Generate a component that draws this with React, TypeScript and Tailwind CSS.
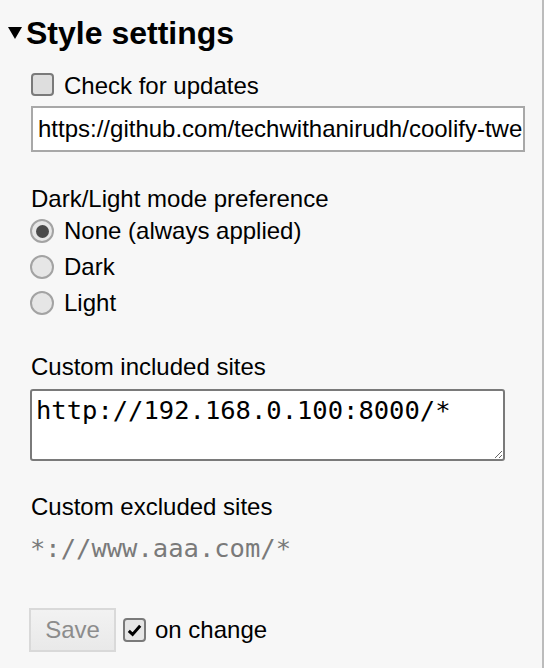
import { useState } from 'react'

type Mode = 'none' | 'dark' | 'light'

function Radio({ checked, label, onClick }: { checked: boolean; label: string; onClick: () => void }) {
  return (
    <label className="flex h-[36px] items-center leading-[36px]" onClick={onClick}>
      <span className="ml-[-1px] mr-[10px] flex h-[24px] w-[24px] items-center justify-center rounded-full border-2 border-[#a3a3a3] bg-[#e6e6e6]">
        {checked && <span className="h-[13px] w-[13px] rounded-full bg-[#4a4a4a]"></span>}
      </span>
      <span>{label}</span>
    </label>
  )
}

export default function App() {
  const [mode, setMode] = useState<Mode>('none')
  const [checkUpdates, setCheckUpdates] = useState(false)
  const [onChange, setOnChange] = useState(true)

  return (
    <div
      className="min-h-[668px] w-full border-r-2 border-[#bcbcbc] bg-[#f7f7f7] pt-[13px] text-[24px] text-black"
      style={{ fontFamily: '"Liberation Sans", Arial, sans-serif' }}
    >
      <div className="flex h-[40px] items-center pl-[8px] text-[32px] leading-[40px] font-bold">
        <svg width="14" height="12" viewBox="0 0 14 12" className="mr-[4px]">
          <path d="M0 0 H14 L7 12 Z" fill="#000" />
        </svg>
        <span>Style settings</span>
      </div>

      <div className="pl-[31px] pr-[17px]">
        <label className="mt-[15px] flex h-[36px] items-center leading-[36px]" onClick={() => setCheckUpdates(!checkUpdates)}>
          <span className="mr-[10px] mt-[-3px] flex h-[23px] w-[23px] items-center justify-center rounded-[4px] border-2 border-[#7a7a7a] bg-[#dedede]">
            {checkUpdates && (
              <svg width="15" height="12" viewBox="0 0 15 12">
                <path d="M1.5 6.5 L5.5 10 L13.5 1.5" stroke="#000" strokeWidth="3" fill="none" />
              </svg>
            )}
          </span>
          <span>Check for updates</span>
        </label>

        <input
          type="text"
          className="mt-[2px] block h-[46px] w-[494px] border-2 border-[#a8a8a8] bg-white pl-[5px] text-[24px] leading-[42px] outline-none"
          defaultValue="https://github.com/techwithanirudh/coolify-tweaks"
        />

        <div className="mt-[33px] leading-[28px]">Dark/Light mode preference</div>
        <Radio checked={mode === 'none'} label="None (always applied)" onClick={() => setMode('none')} />
        <Radio checked={mode === 'dark'} label="Dark" onClick={() => setMode('dark')} />
        <Radio checked={mode === 'light'} label="Light" onClick={() => setMode('light')} />

        <div className="mt-[32px] leading-[28px]">Custom included sites</div>
        <textarea
          className="mt-[8px] ml-[-1px] block h-[72px] w-[475px] rounded-[3px] border-2 border-[#7a7a7a] bg-white pt-[4px] pl-[4px] text-[25.5px] leading-[30px] outline-none"
          style={{ fontFamily: '"DejaVu Sans Mono", monospace' }}
          defaultValue="http://192.168.0.100:8000/*"
        />

        <div className="mt-[32px] leading-[28px]">Custom excluded sites</div>
        <textarea
          className="mt-[12px] ml-[-1px] block h-[68px] w-[475px] resize-none border-0 bg-transparent p-0 text-[25.5px] leading-[30px] outline-none placeholder:text-[#7a7a7a]"
          style={{ fontFamily: '"DejaVu Sans Mono", monospace' }}
          placeholder="*://www.aaa.com/*"
        />

        <div className="mt-[7px] flex items-center">
          <button
            disabled
            className="ml-[-2px] h-[44px] w-[87px] border-2 border-[#d9d9d9] bg-gradient-to-b from-[#f2f2f2] to-[#e9e9e9] text-[24px] leading-[40px] text-[#8c8c8c]"
          >
            Save
          </button>
          <label className="flex items-center" onClick={() => setOnChange(!onChange)}>
            <span className="ml-[7px] mr-[9px] flex h-[24px] w-[23px] items-center justify-center rounded-[4px] border-2 border-[#7a7a7a] bg-[#e6e6e6]">
              {onChange && (
                <svg width="15" height="13" viewBox="0 0 15 13">
                  <path d="M1.8 6.8 L5.6 10.4 L13.2 1.8" stroke="#000" strokeWidth="3" fill="none" />
                </svg>
              )}
            </span>
            <span className="leading-[36px]">on change</span>
          </label>
        </div>
      </div>
    </div>
  )
}
